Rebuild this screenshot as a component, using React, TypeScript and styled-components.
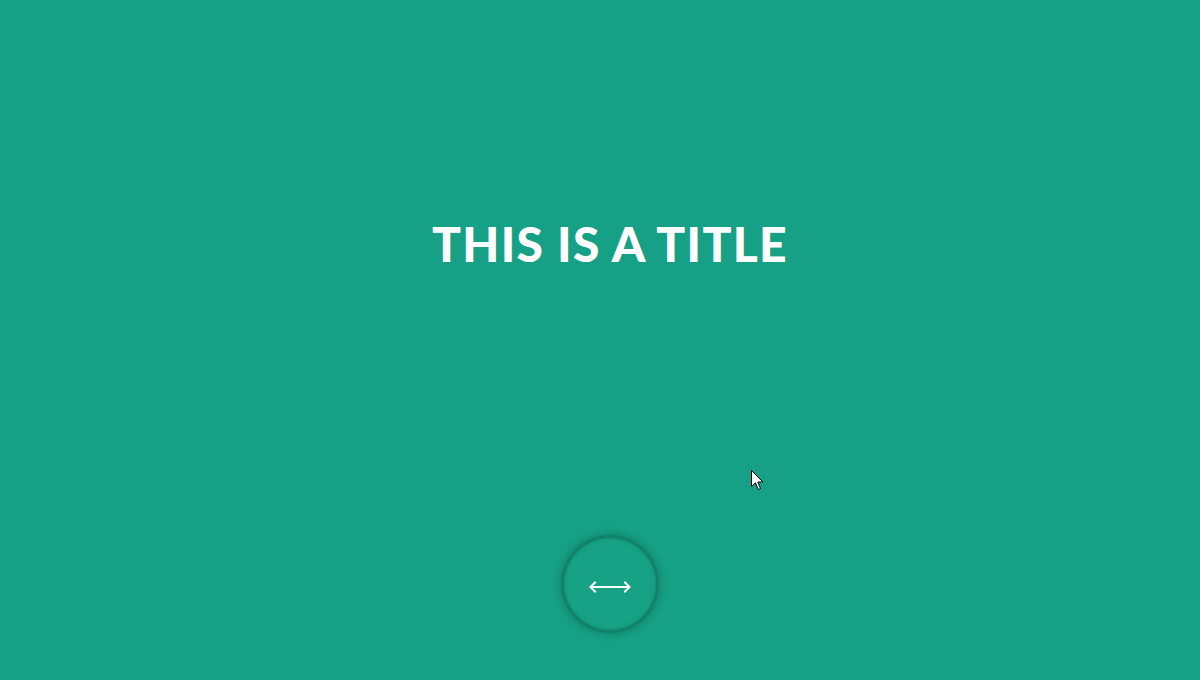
import React from "react";
import styled, { createGlobalStyle } from "styled-components";

const Global = createGlobalStyle`
  html, body { margin: 0; padding: 0; background: #16a085; }
  #root { min-height: 100vh; }
`;

const Page = styled.main`
  position: relative;
  box-sizing: border-box;
  width: 100%;
  height: 680px;
  padding-left: 20px;
  background: #16a085;
  display: flex;
  flex-direction: column;
  align-items: center;
  font-family: Lato, "Open Sans", sans-serif;
  overflow: hidden;
`;

const Title = styled.h1`
  margin: 216px 0 0;
  font-family: Lato, sans-serif;
  font-weight: 900;
  font-size: 48px;
  line-height: 56px;
  letter-spacing: 1.3px;
  color: #ffffff;
  text-transform: uppercase;
`;

const Spacer = styled.div`
  flex: 1;
`;

const CircleButton = styled.button`
  box-sizing: border-box;
  width: 98px;
  height: 98px;
  margin-bottom: 47px;
  border-radius: 50%;
  border: 3px solid rgba(12, 100, 80, 0.5);
  background: #17a285;
  box-shadow: 0 0 5px 3px rgba(12, 100, 80, 0.3), inset 0 0 3px 1px rgba(12, 100, 80, 0.25);
  display: flex;
  align-items: center;
  justify-content: center;
  cursor: pointer;
  padding: 6px 0 0;
`;

const Cursor = styled.svg`
  position: absolute;
  left: 751px;
  top: 470px;
`;

export default function App() {
  return (
    <>
      <Global />
      <Page>
        <Title>This is a title</Title>
        <Spacer />
        <CircleButton aria-label="swap">
          <svg width="42" height="12" viewBox="0 0 42 12" fill="none">
            <path d="M1.5 6H40.5" stroke="#fff" strokeWidth="2" />
            <path d="M6 1.5L1.5 6L6 10.5" stroke="#fff" strokeWidth="2" strokeLinecap="square" />
            <path d="M36 1.5L40.5 6L36 10.5" stroke="#fff" strokeWidth="2" strokeLinecap="square" />
          </svg>
        </CircleButton>
        <Cursor width="13" height="21" viewBox="0 0 13 21">
          <path
            d="M0.5 0.5 L0.5 16.5 L4.5 12.8 L7.2 19.5 L9.5 18.5 L6.8 12 L12 12 Z"
            fill="#fff"
            stroke="#000"
            strokeWidth="1"
          />
        </Cursor>
      </Page>
    </>
  );
}
